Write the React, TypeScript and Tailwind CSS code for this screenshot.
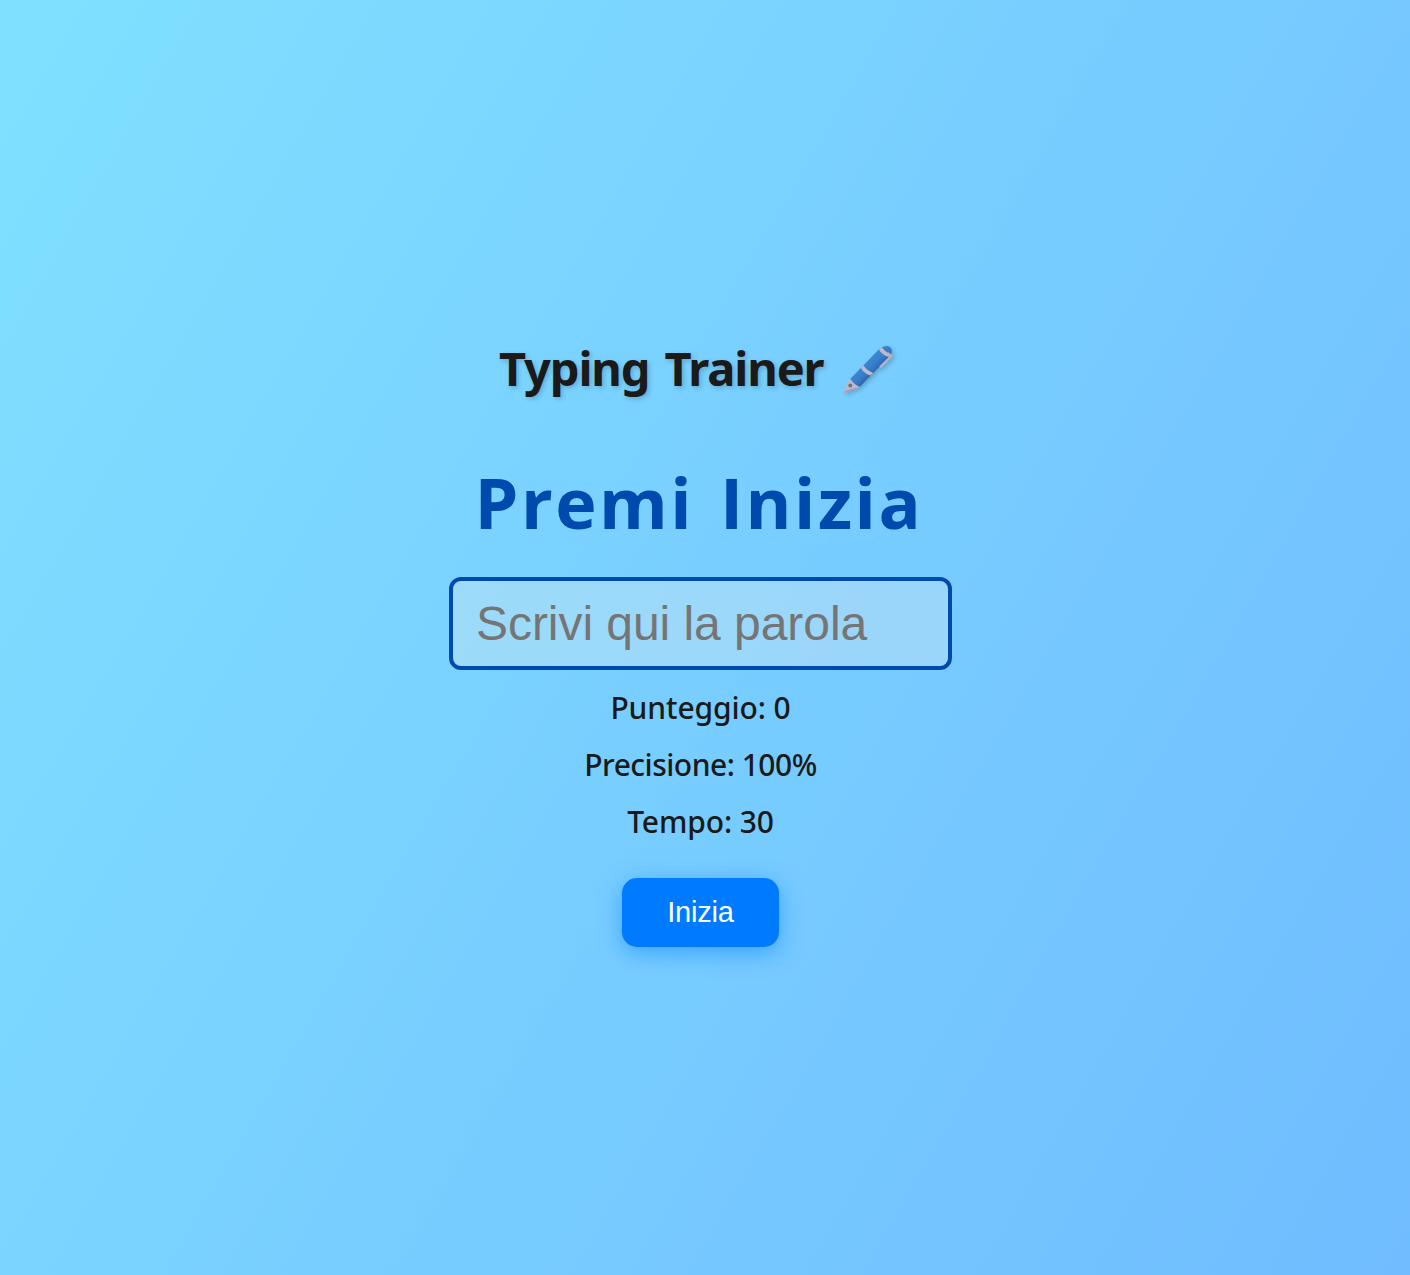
import { useState } from "react";

function PenIcon() {
  return (
    <svg
      viewBox="0 0 50 50"
      aria-hidden="true"
      className="mt-[2px] h-[50px] w-[50px] drop-shadow-[2px_2px_2px_rgba(0,0,0,0.2)]"
    >
      <defs>
        <linearGradient id="barrel" gradientUnits="userSpaceOnUse" x1="22" y1="18" x2="31" y2="27">
          <stop offset="0" stopColor="#3c86d2" />
          <stop offset="0.55" stopColor="#367fcb" />
          <stop offset="1" stopColor="#3167b0" />
        </linearGradient>
      </defs>
      {/* nib */}
      <path d="M7.4 33.6 L16.2 42 L13.4 43.5 Q8 44.8 1.7 47.9 Q0.7 47.9 0.8 46.6 Q3 42 4.9 36.6 Z" fill="#bfb9c8" />
      <path d="M1.2 46.2 L0.9 47.9 L2.6 47.7 L8 45.2 L13.4 43.4 L14.5 42.4 Q7 43.6 1.2 46.2Z" fill="#b796c0" />
      <circle cx="7.3" cy="40.6" r="2" fill="#716f83" />
      {/* barrel */}
      <path
        d="M7.4 33.8 L36 4.2 Q40.5 0.4 44.4 1 Q49.2 2.2 48.8 6.7 Q48.4 9.2 46.5 11.4 L16.8 41.8 Q11 39.8 7.4 33.8Z"
        fill="url(#barrel)"
      />
      <path d="M35.9 4.8 L38.7 2 Q42.6 7.5 48.3 9.4 L45.9 12.1 Q39.2 10.2 35.9 4.8Z" fill="#bfb9c8" />
      <path d="M17.8 22.9 L20.3 20.3 Q24 25.8 30.2 27.9 L27.6 30.5 Q21.2 28.6 17.8 22.9Z" fill="#bfb9c8" />
      {/* clip */}
      <path d="M45 8.4 L48.4 11.2 L37.8 21.6" fill="none" stroke="#b5b0c4" strokeWidth="2.4" strokeLinejoin="round" strokeLinecap="round" />
    </svg>
  );
}

export default function App() {
  const [word, setWord] = useState("");

  return (
    <main className="flex h-[1275px] w-full flex-col items-center bg-[linear-gradient(120deg,#80e1ff,#70bcff)] pt-[337px] pr-[9px] font-['Noto_Sans','Open_Sans',sans-serif] text-[#1a1a1a]">
      <h1 className="flex h-16 items-center gap-[19px] pr-[9px] text-[47px] leading-[62px] font-bold whitespace-nowrap [text-shadow:2px_2px_5px_rgba(0,0,0,0.2)]">
        <span className="w-[325px] pb-[2px] tracking-[-1.1px] [word-spacing:4px]">Typing Trainer</span>
        <PenIcon />
      </h1>
      <div className="mt-[53px] mb-[3px] h-24 w-[452px] font-['Open_Sans','Noto_Sans',sans-serif] text-[70px] leading-[96px] font-[730] tracking-[2.5px] [word-spacing:5px] whitespace-nowrap text-[#004aad]">
        Premi Inizia
      </div>
      <input
        type="text"
        value={word}
        onChange={(e) => setWord(e.target.value)}
        placeholder="Scrivi qui la parola"
        className="mt-6 h-[93px] w-[503px] rounded-xl border-4 border-[#004aad] bg-[#f0f0f0]/30 px-[23px] font-['Liberation_Sans',Arial,sans-serif] text-[48px] tracking-[-0.05px] text-[#1a1a1a] outline-none placeholder:text-[#757575]"
      />
      <div className="mt-[18px] flex flex-col items-center gap-[17px] text-[30px] leading-10 font-medium whitespace-nowrap">
        <p className="tracking-[-0.1px]">Punteggio: 0</p>
        <p className="tracking-[-0.5px]">Precisione: 100%</p>
        <p className="tracking-[-0.1px]">Tempo: 30</p>
      </div>
      <button
        type="button"
        className="mt-[36px] h-[69px] w-[157px] rounded-[15px] bg-[#007bff] font-['Liberation_Sans',Arial,sans-serif] text-[29px] tracking-[-0.2px] text-white shadow-[0_6px_22px_rgba(0,123,255,0.5)]"
      >
        Inizia
      </button>
    </main>
  );
}
